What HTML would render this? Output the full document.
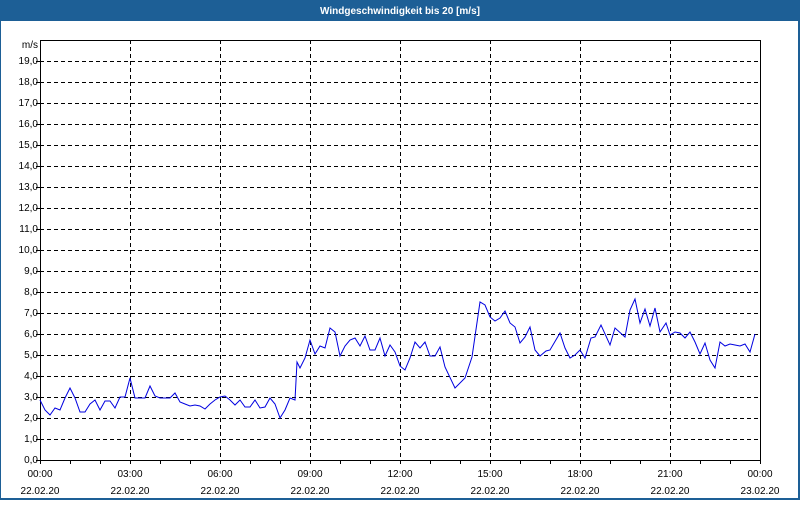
<!DOCTYPE html>
<html><head><meta charset="utf-8"><style>
html,body{margin:0;padding:0;background:#fff}
body{width:800px;height:500px;overflow:hidden;position:relative}
</style></head><body>
<svg width="800" height="500" xmlns="http://www.w3.org/2000/svg" font-family="Liberation Sans, sans-serif" font-size="10">
<rect x="0" y="0" width="800" height="500" fill="#fff"/>
<rect x="0" y="0" width="800" height="21" fill="#1d5f96"/>
<rect x="0.5" y="0.5" width="799" height="499" fill="none" stroke="#1d5f96" stroke-width="1"/>
<rect x="798" y="0" width="2" height="500" fill="#1d5f96"/>
<rect x="0" y="498" width="800" height="2" fill="#1d5f96"/>
<text x="400" y="14" fill="#fff" font-weight="bold" text-anchor="middle">Windgeschwindigkeit bis 20 [m/s]</text>
<g stroke="#000" stroke-width="1" stroke-dasharray="4,3" fill="none">
<path d="M40 439.5H760M40 418.5H760M40 397.5H760M40 376.5H760M40 355.5H760M40 334.5H760M40 313.5H760M40 292.5H760M40 271.5H760M40 250.5H760M40 229.5H760M40 208.5H760M40 187.5H760M40 166.5H760M40 145.5H760M40 124.5H760M40 103.5H760M40 82.5H760M40 61.5H760"/>
<path d="M130.5 40V460M220.5 40V460M310.5 40V460M400.5 40V460M490.5 40V460M580.5 40V460M670.5 40V460"/>
</g>
<g stroke="#000" stroke-width="1" fill="none">
<path d="M40.5 40V464M40 40.5H760.5M760.5 40V464M40 460.5H761"/>
<path d="M70.5 460v4M100.5 460v4M130.5 460v4M160.5 460v4M190.5 460v4M220.5 460v4M250.5 460v4M280.5 460v4M310.5 460v4M340.5 460v4M370.5 460v4M400.5 460v4M430.5 460v4M460.5 460v4M490.5 460v4M520.5 460v4M550.5 460v4M580.5 460v4M610.5 460v4M640.5 460v4M670.5 460v4M700.5 460v4M730.5 460v4"/>
<path d="M36 460.5h4M36 439.5h4M36 418.5h4M36 397.5h4M36 376.5h4M36 355.5h4M36 334.5h4M36 313.5h4M36 292.5h4M36 271.5h4M36 250.5h4M36 229.5h4M36 208.5h4M36 187.5h4M36 166.5h4M36 145.5h4M36 124.5h4M36 103.5h4M36 82.5h4M36 61.5h4"/>
</g>
<g fill="#000" text-anchor="end">
<text x="38" y="48">m/s</text>
<text x="38" y="64">19,0</text><text x="38" y="85">18,0</text><text x="38" y="106">17,0</text><text x="38" y="127">16,0</text><text x="38" y="148">15,0</text><text x="38" y="169">14,0</text><text x="38" y="190">13,0</text><text x="38" y="211">12,0</text><text x="38" y="232">11,0</text><text x="38" y="253">10,0</text><text x="38" y="274">9,0</text><text x="38" y="295">8,0</text><text x="38" y="316">7,0</text><text x="38" y="337">6,0</text><text x="38" y="358">5,0</text><text x="38" y="379">4,0</text><text x="38" y="400">3,0</text><text x="38" y="421">2,0</text><text x="38" y="442">1,0</text><text x="38" y="463">0,0</text>
</g>
<g fill="#000" text-anchor="middle">
<text x="40" y="477">00:00</text><text x="40" y="494">22.02.20</text>
<text x="130" y="477">03:00</text><text x="130" y="494">22.02.20</text>
<text x="220" y="477">06:00</text><text x="220" y="494">22.02.20</text>
<text x="310" y="477">09:00</text><text x="310" y="494">22.02.20</text>
<text x="400" y="477">12:00</text><text x="400" y="494">22.02.20</text>
<text x="490" y="477">15:00</text><text x="490" y="494">22.02.20</text>
<text x="580" y="477">18:00</text><text x="580" y="494">22.02.20</text>
<text x="670" y="477">21:00</text><text x="670" y="494">22.02.20</text>
<text x="760" y="477">00:00</text><text x="760" y="494">23.02.20</text>
</g>
<polyline fill="none" stroke="#0000e0" stroke-width="1" points="40,400 45,410 50,415 55,408 60,410 65,398 70,388 75,398 80,412 85,412 90,404 95,400 100,410 105,401 110,401 115,408 120,397 125,397 130,378 135,398 140,398 145,398 150,386 155,396 160,398 165,398 170,398 175,393 180,402 185,404 190,406 195,405 200,406 205,409 210,404 215,400 220,397 225,396 230,400 235,405 240,400 245,407 250,407 255,400 260,408 265,407 270,398 275,404 280,418 285,410 290,398 295,400 297,362 300,368 305,358 310,340 315,354 320,346 325,348 330,328 335,332 340,356 345,346 350,340 355,338 360,346 365,336 370,350 375,350 380,338 385,356 390,345 395,352 400,366 405,370 410,358 415,342 420,348 425,342 430,356 435,356 440,347 445,367 455,388 465,378 472,357 480,302 485,305 490,317 495,321 500,318 505,311 510,323 515,327 520,343 525,337 530,327 535,350 540,356 546,351 550,350 560,333 565,348 570,358 575,355 580,350 585,358 591,338 595,337 601,325 610,345 615,328 625,337 630,310 635,299 640,323 645,309 650,326 655,308 660,332 666,323 670,335 675,332 680,333 685,338 690,332 695,342 700,354 705,343 710,360 715,368 720,342 725,346 730,344 735,345 740,346 745,344 750,352 755,334"/>
</svg>
</body></html>
